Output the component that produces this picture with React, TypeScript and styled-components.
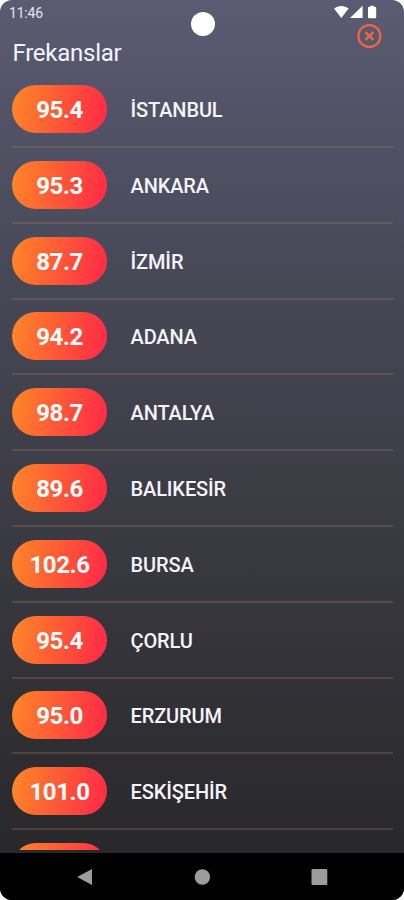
import React from "react";
import styled, { createGlobalStyle } from "styled-components";

const GlobalStyle = createGlobalStyle`
  * { box-sizing: border-box; }
  body { margin: 0; background: #fff; font-family: Roboto, sans-serif; }
`;

const Phone = styled.main`
  position: relative;
  display: flex;
  flex-direction: column;
  width: 404px;
  height: 900px;
  overflow: hidden;
  border-radius: 12px;
  background: linear-gradient(180deg, #5b5c73 0%, #525367 12%, #454653 35%, #38383f 63%, #29282b 94%);
  color: #f4f4fa;
`;

const StatusBar = styled.div`
  display: flex;
  flex: none;
  justify-content: space-between;
  height: 24px;
  padding: 5px 25px 0 9px;
`;

const Time = styled.span`
  font-size: 14px;
  letter-spacing: -0.2px;
  line-height: 16px;
  color: #e4e4ee;
`;

const StatusIcons = styled.svg`
  width: 46px;
  height: 15px;
`;

const Camera = styled.div`
  position: absolute;
  top: 12px;
  left: 191px;
  width: 24px;
  height: 24px;
  border-radius: 50%;
  background: #fff;
`;

const Header = styled.header`
  display: flex;
  flex: none;
  justify-content: space-between;
  align-items: flex-start;
  height: 61px;
  padding: 0 22px 0 12.5px;
`;

const Title = styled.h1`
  margin: 15px 0 0;
  font-size: 24px;
  letter-spacing: -0.25px;
  line-height: 28px;
  font-weight: 400;
`;

const CloseButton = styled.button`
  display: flex;
  margin: 0;
  padding: 0;
  border: 0;
  background: none;
  color: #ed6642;
`;

const List = styled.ul`
  flex: none;
  height: 764.5px;
  margin: 0 11px 0 12px;
  padding: 0;
  overflow: hidden;
  list-style: none;
`;

const Row = styled.li`
  display: flex;
  flex-direction: column;
  height: 75.8px;
`;

const Station = styled.div`
  display: flex;
  align-items: center;
  gap: 23.5px;
  height: 48px;
  margin-bottom: 13px;
`;

const Frequency = styled.span`
  display: flex;
  align-items: center;
  justify-content: center;
  width: 95px;
  height: 48px;
  padding-top: 2px;
  border-radius: 24px;
  background: linear-gradient(100deg, #ff8428 4%, #ff2f45 92%);
  color: #fff;
  font-size: 24px;
  font-weight: 700;
  letter-spacing: -0.4px;
`;

const City = styled.span`
  padding-top: 2px;
  font-size: 20px;
  font-weight: 500;
  letter-spacing: -0.12px;
  line-height: 24px;
`;

const Divider = styled.div`
  height: 2px;
  background: rgba(176, 124, 92, 0.27);
`;

const NavBar = styled.nav`
  display: flex;
  justify-content: space-between;
  align-items: center;
  height: 47px;
  margin-top: auto;
  padding: 0 76px;
  background: #000;
`;

const NavIcon = styled.svg`
  width: 18px;
  height: 18px;
  fill: #9c9c9c;
`;

const stations = [
  ["95.4", "İSTANBUL"],
  ["95.3", "ANKARA"],
  ["87.7", "İZMİR"],
  ["94.2", "ADANA"],
  ["98.7", "ANTALYA"],
  ["89.6", "BALIKESİR"],
  ["102.6", "BURSA"],
  ["95.4", "ÇORLU"],
  ["95.0", "ERZURUM"],
  ["101.0", "ESKİŞEHİR"],
  ["", ""],
];

export default function App() {
  return (
    <>
      <GlobalStyle />
      <Phone>
        <StatusBar>
          <Time>11:46</Time>
          <StatusIcons viewBox="0 0 46 15" fill="#fff">
            <path d="M1 3.600C5.200 0 11.400 0 15.600 3.600L8.300 13Z" />
            <path d="M29.600 .8V13H17Z" />
            <path d="M36.200 1.800h1.200V.7h3.400v1.100h1.200q1.200 0 1.200 1.200v9q0 1.200-1.200 1.200h-5.800Q35 13.200 35 12V3q0-1.200 1.200-1.200Z" />
          </StatusIcons>
        </StatusBar>
        <Header>
          <Title>Frekanslar</Title>
          <CloseButton aria-label="Kapat">
            <svg width="26" height="24" viewBox="0 0 26 24" fill="none" stroke="currentColor">
              <circle cx="13.400" cy="12" r="11" strokeWidth="2.300" />
              <path d="m9.500 8.100 7.800 7.800m0-7.800-7.800 7.800" strokeWidth="2.500" />
            </svg>
          </CloseButton>
        </Header>
        <List>
          {stations.map(([frequency, city], index) => (
            <Row key={index}>
              <Station>
                <Frequency>{frequency}</Frequency>
                <City>{city}</City>
              </Station>
              <Divider />
            </Row>
          ))}
        </List>
        <NavBar>
          <NavIcon viewBox="0 0 18 18"><path d="M1.200 9 16 1v16Z" /></NavIcon>
          <NavIcon viewBox="0 0 18 18"><circle cx="9.400" cy="9" r="7.700" /></NavIcon>
          <NavIcon viewBox="0 0 18 18"><rect x="1.500" y="1" width="15.800" height="16" rx="1" /></NavIcon>
        </NavBar>
        <Camera />
      </Phone>
    </>
  );
}
